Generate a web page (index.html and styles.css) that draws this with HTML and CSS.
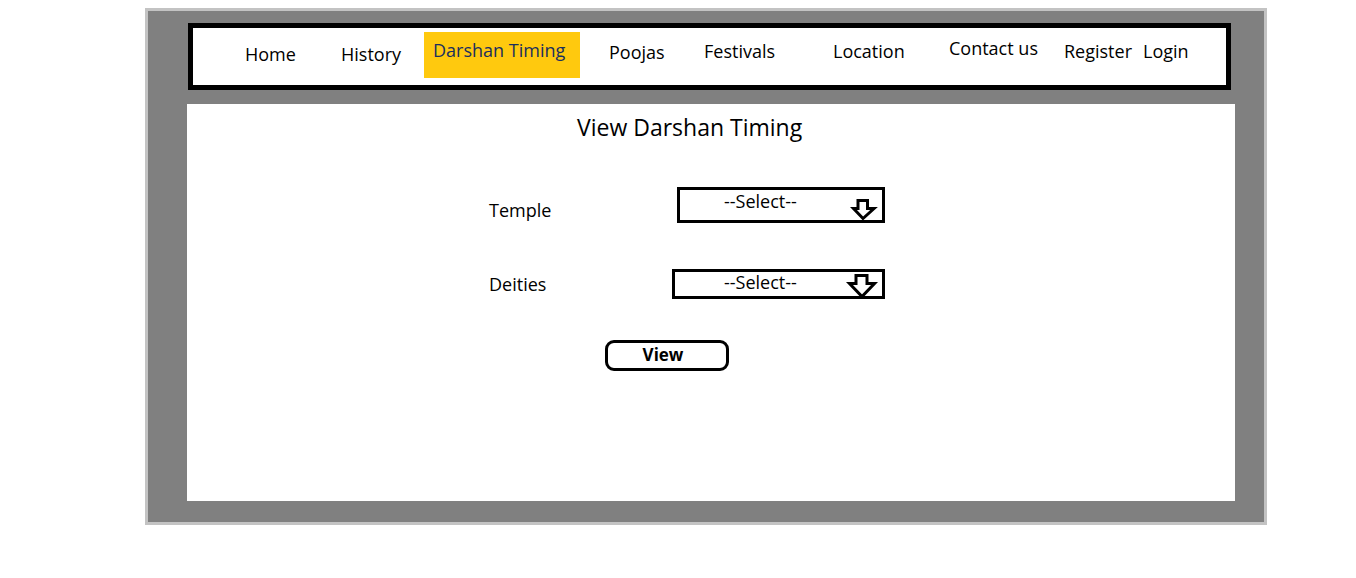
FILE: index.html
```html
<!DOCTYPE html>
<html lang="en">
<head>
<meta charset="utf-8">
<title>View Darshan Timing</title>
<link rel="stylesheet" href="styles.css">
</head>
<body>
<div class="frame">
  <nav class="nav">
    <a class="nav-item home">Home</a>
    <a class="nav-item history">History</a>
    <a class="nav-item active">Darshan Timing</a>
    <a class="nav-item poojas">Poojas</a>
    <a class="nav-item festivals">Festivals</a>
    <a class="nav-item location">Location</a>
    <a class="nav-item contact">Contact us</a>
    <a class="nav-item register">Register</a>
    <a class="nav-item login">Login</a>
  </nav>
  <main class="panel">
    <h1 class="title">View Darshan Timing</h1>
    <div class="row row-temple">
      <span class="label">Temple</span>
      <div class="select select-temple">
        <span class="select-text">--Select--</span>
        <svg class="arrow arrow-temple" width="24" height="21" viewBox="0 0 24 21">
          <path d="M6 1.5 H15.5 V9.5 H22 L11 19.5 L1.5 9.5 H6 Z" fill="#fff" stroke="#000" stroke-width="3"/>
        </svg>
      </div>
    </div>
    <div class="row row-deities">
      <span class="label">Deities</span>
      <div class="select select-deities">
        <span class="select-text">--Select--</span>
        <svg class="arrow arrow-deities" width="28" height="24" viewBox="0 0 28 24">
          <path d="M8 1.5 H19 V9.5 H26.5 L14 22.5 L1.5 9.5 H8 Z" fill="#fff" stroke="#000" stroke-width="3"/>
        </svg>
      </div>
    </div>
    <button class="view-btn">View</button>
  </main>
</div>
</body>
</html>
```
FILE: styles.css
```css
* { box-sizing: border-box; }
html, body {
  margin: 0;
  padding: 0;
  background: #fff;
  font-family: "Open Sans", "Liberation Sans", sans-serif;
  color: #000;
}
.frame {
  margin: 8px 0 0 145px;
  width: 1122px;
  height: 517px;
  border: 3px solid #c3c3c3;
  background: #808080;
  padding: 12px 29px 21px 39px;
}
.nav {
  display: flex;
  align-items: flex-start;
  height: 67px;
  margin: 0 4px 0 1px;
  border: 5px solid #000;
  background: #fff;
  padding-left: 52px;
}
.nav-item {
  font-size: 18px;
  line-height: 25px;
  white-space: nowrap;
  color: #000;
}
.home { width: 96px; margin-top: 14px; }
.history { width: 83px; margin-top: 14px; }
.active {
  width: 156px;
  height: 46px;
  margin-top: 4px;
  margin-right: 29px;
  padding: 6px 0 0 9px;
  background: #ffc90e;
  color: #1a2f5e;
}
.poojas { width: 95px; margin-top: 12px; }
.festivals { width: 129px; margin-top: 11px; }
.location { width: 116px; margin-top: 11px; }
.contact { width: 115px; margin-top: 8px; }
.register { width: 79px; margin-top: 11px; }
.login { margin-top: 11px; }

.panel {
  width: 1048px;
  height: 397px;
  margin-top: 14px;
  background: #fff;
  padding-top: 8px;
}
.title {
  margin: 0;
  padding-left: 390px;
  font-size: 23px;
  line-height: 31px;
  font-weight: 400;
}
.row {
  display: flex;
  align-items: flex-start;
  padding-left: 302px;
}
.row-temple { margin-top: 44px; }
.row-deities { margin-top: 46px; }
.label {
  width: 183px;
  font-size: 18px;
  line-height: 25px;
}
.row-temple .label { margin-top: 11px; }
.row-deities .label { margin-top: 3px; }
.select {
  display: flex;
  align-items: flex-start;
  border: 3px solid #000;
  background: #fff;
}
.select-temple {
  margin-left: 5px;
  width: 208px;
  height: 36px;
  padding: 2px 0 0 44px;
}
.select-deities {
  width: 213px;
  height: 30px;
  padding: 1px 0 0 49px;
}
.select-text {
  font-size: 18px;
  line-height: 18px;
}
.arrow {
  display: block;
  margin-left: auto;
  margin-right: 6px;
  overflow: visible;
}
.arrow-temple { margin-top: 7px; }
.arrow-deities { margin-top: 1px; }
.view-btn {
  display: block;
  margin: 41px 0 0 418px;
  width: 124px;
  height: 31px;
  border: 3px solid #000;
  border-radius: 9px;
  background: #fff;
  padding: 0 8px 2px 0;
  font-family: "Open Sans", "Liberation Sans", sans-serif;
  font-size: 17px;
  font-weight: 700;
  line-height: 24px;
  color: #000;
}
```
